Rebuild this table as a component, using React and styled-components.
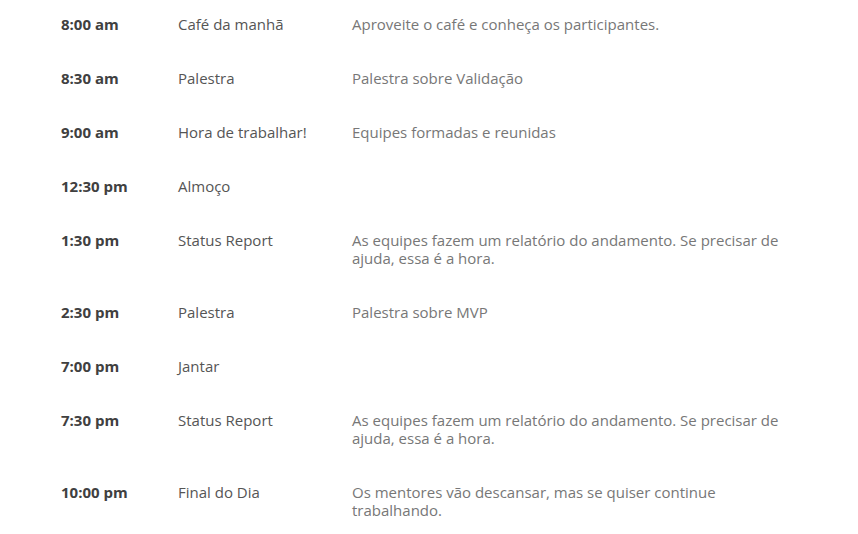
import styled, { createGlobalStyle } from "styled-components";

const GlobalStyle = createGlobalStyle`
  body {
    margin: 0;
    background: #fff;
    font-family: "Open Sans", "Liberation Sans", sans-serif;
    font-size: 15px;
    line-height: 18px;
  }
`;

const Schedule = styled.div`
  display: flex;
  flex-direction: column;
  padding-left: 61px;
`;

const Row = styled.div`
  display: grid;
  grid-template-columns: 117px 174px 440px;
  padding: 15px 0 21px;
`;

const Time = styled.div`
  font-weight: 700;
  color: #404040;
`;

const Title = styled.div`
  color: #555;
`;

const Desc = styled.div`
  color: #777;
`;

const items = [
  ["8:00 am", "Café da manhã", "Aproveite o café e conheça os participantes."],
  ["8:30 am", "Palestra", "Palestra sobre Validação"],
  ["9:00 am", "Hora de trabalhar!", "Equipes formadas e reunidas"],
  ["12:30 pm", "Almoço", ""],
  ["1:30 pm", "Status Report", "As equipes fazem um relatório do andamento. Se precisar de ajuda, essa é a hora."],
  ["2:30 pm", "Palestra", "Palestra sobre MVP"],
  ["7:00 pm", "Jantar", ""],
  ["7:30 pm", "Status Report", "As equipes fazem um relatório do andamento. Se precisar de ajuda, essa é a hora."],
  ["10:00 pm", "Final do Dia", "Os mentores vão descansar, mas se quiser continue trabalhando."],
];

const App = () => {
  return (
    <>
      <GlobalStyle />
      <Schedule>
        {items.map(([time, title, desc]) => (
          <Row key={time}>
            <Time>{time}</Time>
            <Title>{title}</Title>
            <Desc>{desc}</Desc>
          </Row>
        ))}
      </Schedule>
    </>
  );
};

export default App;
